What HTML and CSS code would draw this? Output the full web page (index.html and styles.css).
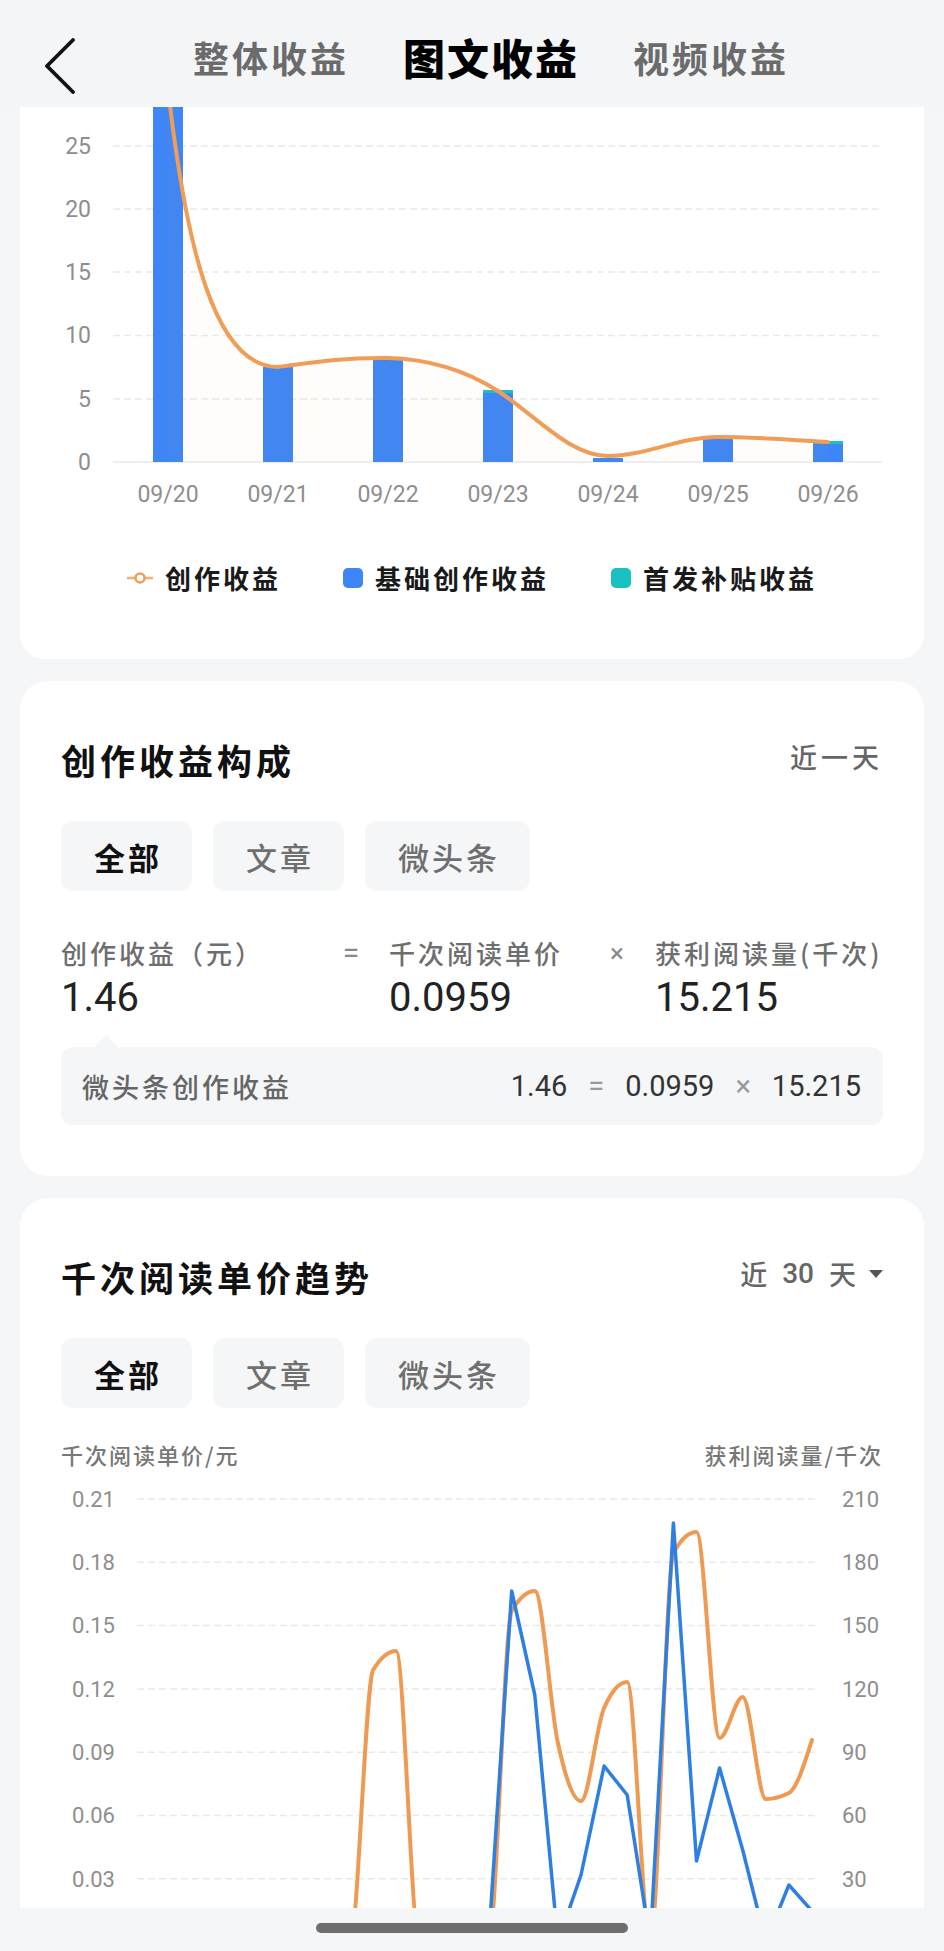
FILE: index.html
```html
<!DOCTYPE html>
<html lang="zh-CN">
  <head>
    <meta charset="UTF-8" />
    <title>图文收益</title>
    <meta name="viewport" content="width=device-width, initial-scale=1.0" />
    <link rel="stylesheet" href="styles.css">
  </head>
  <body>
    <div class="screen">
      <header class="topbar">
        <a class="back" href="#">
          <svg width="32" height="56" viewBox="0 0 32 56"><path d="M29 2 L3 28 L29 54" /></svg>
        </a>
        <nav class="tabs">
          <a href="#">整体收益</a>
          <a href="#" class="active">图文收益</a>
          <a href="#">视频收益</a>
        </nav>
      </header>

      <main class="content">
        <!-- daily income chart (top part scrolled under the header) -->
        <section class="card card-income">
          <svg class="chart" width="904" height="410" viewBox="0 0 904 410">
            <g class="grid">
              <line x1="93" y1="39" x2="860" y2="39" />
              <line x1="93" y1="102" x2="860" y2="102" />
              <line x1="93" y1="165" x2="860" y2="165" />
              <line x1="93" y1="228.5" x2="860" y2="228.5" />
              <line x1="93" y1="292" x2="860" y2="292" />
              <line class="base" x1="93" y1="355" x2="862" y2="355" />
            </g>
            <g class="ylabels" text-anchor="end">
              <text x="71" y="47">25</text>
              <text x="71" y="110">20</text>
              <text x="71" y="173">15</text>
              <text x="71" y="236">10</text>
              <text x="71" y="300">5</text>
              <text x="71" y="363">0</text>
            </g>
            <g class="bars">
              <rect x="133" y="-20" width="30" height="375" />
              <rect x="243" y="260" width="30" height="95" />
              <rect x="353" y="253" width="30" height="102" />
              <rect x="463" y="286" width="30" height="69" />
              <rect class="teal" x="463" y="283" width="30" height="3" />
              <rect x="573" y="351" width="30" height="4" />
              <rect x="683" y="330" width="30" height="25" />
              <rect x="793" y="337" width="30" height="18" />
              <rect class="teal" x="793" y="334" width="30" height="3" />
            </g>
            <path class="area" d="M146 -37 C165 143, 195 260, 258 260 C295 255, 330 250, 368 251 C410 252, 445 263, 478 284 C515 308, 550 349, 588 349 C625 349, 660 330, 698 330 C735 330, 770 333, 808 335 L808 355 L146 355 Z" />
            <path class="line" d="M146 -37 C165 143, 195 260, 258 260 C295 255, 330 250, 368 251 C410 252, 445 263, 478 284 C515 308, 550 349, 588 349 C625 349, 660 330, 698 330 C735 330, 770 333, 808 335" />
            <g class="xlabels" text-anchor="middle">
              <text x="148" y="395">09/20</text>
              <text x="258" y="395">09/21</text>
              <text x="368" y="395">09/22</text>
              <text x="478" y="395">09/23</text>
              <text x="588" y="395">09/24</text>
              <text x="698" y="395">09/25</text>
              <text x="808" y="395">09/26</text>
            </g>
          </svg>

          <div class="legend">
            <span class="legend-item">
              <svg width="26" height="12" viewBox="0 0 26 12"><line x1="0" y1="6" x2="26" y2="6" /><circle cx="13" cy="6" r="4.5" /></svg>
              创作收益
            </span>
            <span class="legend-item"><i class="swatch blue"></i>基础创作收益</span>
            <span class="legend-item"><i class="swatch teal"></i>首发补贴收益</span>
          </div>
        </section>

        <!-- income breakdown -->
        <section class="card card-panel">
          <div class="card-head">
            <h2 class="card-title">创作收益构成</h2>
            <span class="range">近一天</span>
          </div>

          <div class="filters">
            <a href="#" class="pill active">全部</a>
            <a href="#" class="pill">文章</a>
            <a href="#" class="pill">微头条</a>
          </div>

          <div class="formula">
            <div class="term">
              <div class="term-label">创作收益（元）</div>
              <div class="term-value">1.46</div>
            </div>
            <div class="op">=</div>
            <div class="term">
              <div class="term-label">千次阅读单价</div>
              <div class="term-value">0.0959</div>
            </div>
            <div class="op times">×</div>
            <div class="term">
              <div class="term-label">获利阅读量(千次)</div>
              <div class="term-value">15.215</div>
            </div>
          </div>

          <div class="detail">
            <span class="detail-name">微头条创作收益</span>
            <span class="detail-calc">
              <span>1.46</span><span class="sym">=</span><span>0.0959</span><span class="sym">×</span><span>15.215</span>
            </span>
          </div>
        </section>

        <!-- price per thousand reads trend -->
        <section class="card card-panel">
          <div class="card-head">
            <h2 class="card-title">千次阅读单价趋势</h2>
            <span class="range range-select">近<b>30</b>天<i class="caret"></i></span>
          </div>

          <div class="filters">
            <a href="#" class="pill active">全部</a>
            <a href="#" class="pill">文章</a>
            <a href="#" class="pill">微头条</a>
          </div>

          <div class="axis-titles">
            <span>千次阅读单价/元</span>
            <span>获利阅读量/千次</span>
          </div>

          <svg class="chart trend" width="904" height="480" viewBox="0 0 904 480">
            <g class="grid">
              <line x1="117" y1="31" x2="798" y2="31" />
              <line x1="117" y1="94.3" x2="798" y2="94.3" />
              <line x1="117" y1="157.6" x2="798" y2="157.6" />
              <line x1="117" y1="220.9" x2="798" y2="220.9" />
              <line x1="117" y1="284.2" x2="798" y2="284.2" />
              <line x1="117" y1="347.5" x2="798" y2="347.5" />
              <line x1="117" y1="410.8" x2="798" y2="410.8" />
              <line class="base" x1="117" y1="474" x2="798" y2="474" />
            </g>
            <g class="ylabels" text-anchor="end">
              <text x="95" y="39">0.21</text>
              <text x="95" y="102">0.18</text>
              <text x="95" y="165">0.15</text>
              <text x="95" y="229">0.12</text>
              <text x="95" y="292">0.09</text>
              <text x="95" y="355">0.06</text>
              <text x="95" y="419">0.03</text>
            </g>
            <g class="ylabels">
              <text x="822" y="39">210</text>
              <text x="822" y="102">180</text>
              <text x="822" y="165">150</text>
              <text x="822" y="229">120</text>
              <text x="822" y="292">90</text>
              <text x="822" y="355">60</text>
              <text x="822" y="419">30</text>
            </g>
            <path class="line" d="M117 474 L330 474 C337.7 474, 345.4 214.6, 353.1 202 C360.8 189.4, 368.5 183, 376.2 183 C383.9 183, 391.6 474, 399.3 474 L468.6 474 C476.3 474, 484 156.3, 491.7 143 C499.4 129.7, 507.1 123, 514.8 123 C522.5 123, 530.2 240, 537.9 275 C545.6 310, 553.3 333, 561 333 C568.7 333, 576.4 257.4, 584.1 240 C591.8 222.6, 599.5 214, 607.2 214 C614.9 214, 622.6 474, 630.3 474 C638 474, 645.7 99, 653.4 85 C661.1 71, 668.8 64, 676.5 64 C684.2 64, 691.9 270, 699.6 270 C707.3 270, 715 229, 722.7 229 C730.4 229, 738.1 331, 745.8 331 C753.5 331, 761.2 329, 768.9 325 C776.6 321, 784.3 296.4, 792 272" />
            <polyline class="reads" points="117,474 468.6,474 491.7,123 514.8,227 537.9,474 561,407 584.1,298 607.2,327 630.3,474 653.4,55 676.5,393 699.6,300 722.7,382 745.8,474 768.9,417 792,443" />
          </svg>
        </section>
      </main>

      <footer class="homebar"><span class="indicator"></span></footer>
    </div>
  </body>
</html>
```

FILE: styles.css
```css
* {
  box-sizing: border-box;
}

body {
  margin: 0;
  font-family: "Noto Sans CJK SC", "Noto Sans", sans-serif;
  background: #f5f6f8;
  color: #1a1a1a;
}

a {
  text-decoration: none;
  color: inherit;
}

.screen {
  height: 100vh;
  display: flex;
  flex-direction: column;
  overflow: hidden;
}

/* top bar */

.topbar {
  flex: none;
  height: 107px;
  display: flex;
  align-items: center;
  padding: 6px 0 0 44px;
  background: #f4f5f7;
}

.back {
  display: flex;
  margin-top: 18px;
}

.back path {
  fill: none;
  stroke: #111;
  stroke-width: 3.8;
  stroke-linecap: round;
  stroke-linejoin: round;
}

.tabs {
  display: flex;
  align-items: center;
  gap: 54px;
  margin-left: 117px;
}

.tabs a {
  font-size: 36px;
  line-height: 48px;
  letter-spacing: 3px;
  font-weight: 700;
  color: #6b6b6b;
}

.tabs a.active {
  font-size: 42px;
  letter-spacing: 2px;
  font-weight: 900;
  color: #000;
}

/* content */

.content {
  flex: 1;
  overflow: hidden;
  padding: 0 20px;
}

.card {
  background: #fff;
  border-radius: 28px;
}

.card + .card {
  margin-top: 22px;
}

.chart {
  display: block;
}

.chart .grid line {
  stroke: #e9e9ec;
  stroke-width: 1.5;
  stroke-dasharray: 7 4;
}

.chart .grid line.base {
  stroke-dasharray: none;
}

.chart text {
  font-family: Roboto, "Liberation Sans", sans-serif;
  font-size: 23px;
  fill: #8e8e8e;
}

.chart .bars rect {
  fill: #3e86f5;
}

.chart .bars rect.teal {
  fill: #19c2c0;
}

.chart .line {
  fill: none;
  stroke: #f09d58;
  stroke-width: 4;
  stroke-linecap: round;
}

.chart .area {
  fill: #f6b06d;
  opacity: 0.025;
}

.card-income {
  border-radius: 0 0 24px 24px;
  padding-bottom: 66px;
}

.legend {
  display: flex;
  justify-content: center;
  gap: 62px;
  margin-top: 46px;
  font-size: 26px;
  line-height: 30px;
  letter-spacing: 3px;
  font-weight: 700;
  color: #1a1a1a;
}

.legend-item {
  display: flex;
  align-items: center;
  gap: 12px;
}

.legend-item line {
  stroke: #f3b074;
  stroke-width: 2.5;
}

.legend-item circle {
  fill: #fff;
  stroke: #f09d58;
  stroke-width: 2.5;
}

.swatch {
  width: 20px;
  height: 20px;
  border-radius: 5px;
}

.swatch.blue {
  background: #3e86f5;
}

.swatch.teal {
  background: #19c2c0;
}

/* panels */

.card-panel {
  padding: 59px 41px 51px;
}

.card-head {
  display: flex;
  justify-content: space-between;
  align-items: center;
}

.card-title {
  margin: 0;
  font-size: 35px;
  line-height: 40px;
  letter-spacing: 4px;
  font-weight: 700;
  color: #111;
}

.range {
  font-size: 27px;
  line-height: 32px;
  letter-spacing: 4px;
  font-weight: 500;
  color: #666;
  margin-bottom: 6px;
}

.range-select {
  display: flex;
  align-items: center;
  gap: 15px;
  letter-spacing: 0;
}

.range-select b {
  font-family: Roboto, "Liberation Sans", sans-serif;
  font-size: 28px;
  font-weight: 500;
}

.caret {
  width: 0;
  height: 0;
  border-left: 7px solid transparent;
  border-right: 7px solid transparent;
  border-top: 8px solid #555;
  margin-left: -2px;
}

.filters {
  display: flex;
  gap: 21px;
  margin-top: 41px;
}

.pill {
  height: 70px;
  display: flex;
  align-items: center;
  padding: 0 30px 0 33px;
  border-radius: 12px;
  background: #f5f6f8;
  font-size: 31px;
  letter-spacing: 3px;
  font-weight: 500;
  color: #6f6f6f;
}

.pill.active {
  font-weight: 700;
  color: #111;
}

.formula {
  display: grid;
  grid-template-columns: 268px 44px 222px 44px 1fr;
  margin-top: 46px;
}

.term + .op + .term {
  padding-left: 16px;
}

.term-label {
  font-size: 26px;
  line-height: 32px;
  letter-spacing: 3px;
  font-weight: 500;
  color: #6e6e6e;
  white-space: nowrap;
}

.term-value {
  margin-top: 6px;
  font-family: Roboto, "Liberation Sans", sans-serif;
  font-size: 40px;
  line-height: 46px;
  color: #222;
}

.op {
  font-family: Roboto, "Liberation Sans", sans-serif;
  font-size: 30px;
  line-height: 32px;
  text-align: center;
  color: #888;
}

.op.times {
  font-size: 26px;
}

.detail {
  position: relative;
  margin-top: 26px;
  height: 78px;
  display: flex;
  justify-content: space-between;
  align-items: center;
  padding: 0 22px 0 21px;
  border-radius: 12px;
  background: #f5f6f8;
}

.detail::before {
  content: "";
  position: absolute;
  top: -12px;
  left: 33px;
  border-left: 12px solid transparent;
  border-right: 12px solid transparent;
  border-bottom: 12px solid #f5f6f8;
}

.detail-name {
  font-size: 27px;
  letter-spacing: 3px;
  font-weight: 500;
  color: #666;
}

.detail-calc {
  display: flex;
  gap: 21px;
  font-family: Roboto, "Liberation Sans", sans-serif;
  font-size: 29px;
  color: #333;
}

.detail-calc .sym {
  color: #999;
}

.axis-titles {
  display: flex;
  justify-content: space-between;
  margin-top: 33px;
  font-size: 22px;
  line-height: 26px;
  letter-spacing: 2px;
  font-weight: 500;
  color: #777;
}

.trend {
  margin: 1px -41px 0;
}

.trend text {
  font-size: 22px;
}

.trend .line {
  stroke: #ef9a53;
}

.trend .reads {
  fill: none;
  stroke: #2f7fe3;
  stroke-width: 3.5;
  stroke-linejoin: round;
}

/* bottom home indicator */

.homebar {
  flex: none;
  height: 43px;
  display: flex;
  justify-content: center;
  padding-top: 15px;
  background: #f5f6f8;
}

.indicator {
  width: 312px;
  height: 10px;
  border-radius: 5px;
  background: #6e6e6e;
}
```
